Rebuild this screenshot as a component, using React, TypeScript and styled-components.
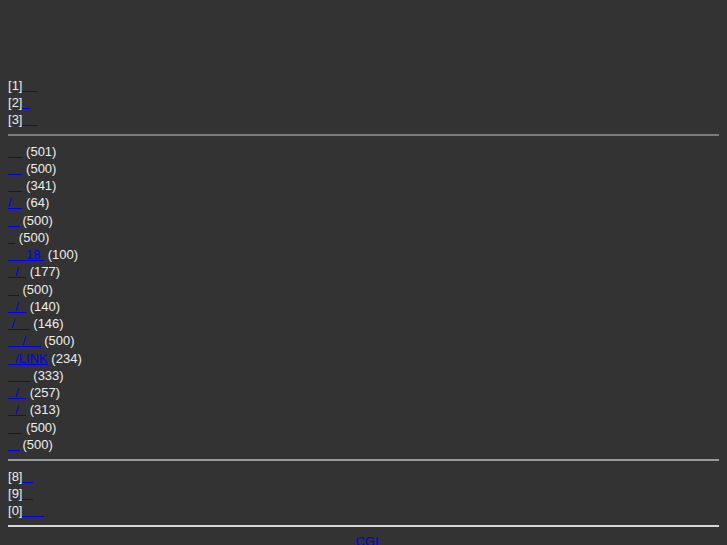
import * as React from "react";
import styled, { createGlobalStyle } from "styled-components";

const GlobalStyle = createGlobalStyle`
    html, body {
        background: #333333;
    }
    body {
        margin: 8px;
        color: #eeeeee;
        font-family: "Liberation Sans", Arial, sans-serif;
        font-size: 13px;
        line-height: 17px;
    }
`;

const Page = styled.div`
    padding-top: 68px;
`;

const List = styled.div`
    padding-top: 1px;
`;

const Line = styled.div`
    white-space: pre;
    line-height: 17px;

    &:nth-child(4n) {
        padding-bottom: 1px;
    }
`;

// underline painted as a 1px strip so it lands on a whole pixel row
const Link = styled.a`
    display: inline-block;
    line-height: 13px;
    color: #0000ee;
    text-decoration: none;
    background: linear-gradient(#0000ee, #0000ee) left bottom / 100% 1px no-repeat;
`;

const Rule = styled.hr<{ $tone: "dim" | "mid" | "bright" }>`
    border: none;
    height: 2px;
    margin: 6px 0;
    background: ${p => p.$tone === "dim" ? "#7b7b7b" : p.$tone === "mid" ? "#9a9a9a" : "#d8d8d8"};
`;

const Footer = styled.div`
    text-align: center;
    padding-left: 7px;
`;

const nb = (n: number) => "\u00a0".repeat(n);

const menuTop = [
    { key: "1", label: nb(4) },
    { key: "2", label: nb(2) },
    { key: "3", label: nb(4) },
];

const menuBottom = [
    { key: "8", label: nb(3) },
    { key: "9", label: nb(3) },
    { key: "0", label: nb(6) },
];

const threads = [
    { label: nb(4), count: 501 },
    { label: nb(4), count: 500 },
    { label: nb(4), count: 341 },
    { label: "/" + nb(3), count: 64 },
    { label: nb(3), count: 500 },
    { label: nb(2), count: 500 },
    { label: nb(5) + "18" + nb(1), count: 100 },
    { label: nb(2) + "/" + nb(2), count: 177 },
    { label: nb(3), count: 500 },
    { label: nb(2) + "/" + nb(2), count: 140 },
    { label: nb(1) + "/" + nb(4), count: 146 },
    { label: nb(4) + "/" + nb(4), count: 500 },
    { label: nb(2) + "/LINK", count: 234 },
    { label: nb(6), count: 333 },
    { label: nb(2) + "/" + nb(2), count: 257 },
    { label: nb(2) + "/" + nb(2), count: 313 },
    { label: nb(4), count: 500 },
    { label: nb(3), count: 500 },
];

const Menu = (props: { items: { key: string; label: string }[] }) => (
    <List>
        {props.items.map(m => (
            <Line key={m.key}>[{m.key}]<Link href="#">{m.label}</Link></Line>
        ))}
    </List>
);

export default function App() {
    return (
        <Page>
            <GlobalStyle />
            <Menu items={menuTop} />
            <Rule $tone="dim" />
            <List>
                {threads.map((t, i) => (
                    <Line key={i}><Link href="#">{t.label}</Link> ({t.count})</Line>
                ))}
            </List>
            <Rule $tone="mid" />
            <Menu items={menuBottom} />
            <Rule $tone="bright" />
            <Footer><Link href="#">CGI</Link></Footer>
        </Page>
    );
}
